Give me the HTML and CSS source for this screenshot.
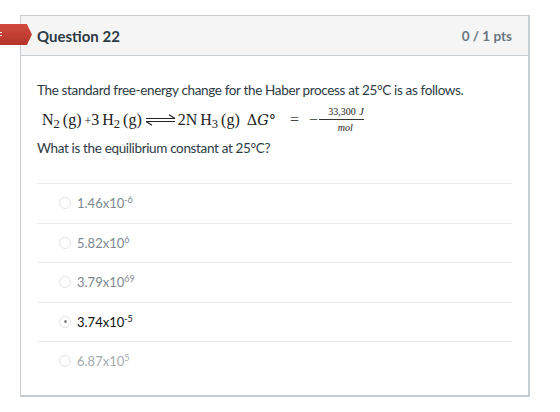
FILE: index.html
```html
<!DOCTYPE html>
<html>
<head>
  <title>Question 22</title>
  <meta name="viewport" content="width=device-width, initial-scale=1.0">
  <link rel="stylesheet" href="styles.css">
</head>
<body>

  <div class="question">
    <div class="question-header">
      <span class="flag"></span>
      <span class="question-name">Question 22</span>
      <span class="points">0 / 1 pts</span>
    </div>

    <div class="question-body">
      <p class="question-text">The standard free-energy change for the Haber process at 25&deg;C is as follows.</p>

      <div class="equation">
        <span>N<sub>2</sub> (g) <span class="plus">+</span>3 H<sub>2</sub> (g)</span>
        <svg class="eq-arrow" width="31" height="12" viewBox="0 0 31 12">
          <path d="M1 4.5 H30 M30 4.5 L24 0.8" fill="none" stroke="#222" stroke-width="1.2"/>
          <path d="M1 7.5 H30 M1 7.5 L7 11.2" fill="none" stroke="#222" stroke-width="1.2"/>
        </svg>
        <span>2N H<sub>3</sub> (g)</span>
        <span class="delta">&Delta;<i>G</i>&deg;</span>
        <span class="eq-sign">=</span>
        <span class="eq-sign minus">&minus;</span>
        <span class="fraction">
          <span class="num">33,300 <i>J</i></span>
          <span class="den"><i>mol</i></span>
        </span>
      </div>

      <p class="question-text">What is the equilibrium constant at 25&deg;C?</p>

      <div class="answers">
        <label class="answer">
          <span class="radio"></span>
          <span>1.46x10<sup>-6</sup></span>
        </label>
        <label class="answer">
          <span class="radio"></span>
          <span>5.82x10<sup>6</sup></span>
        </label>
        <label class="answer">
          <span class="radio"></span>
          <span>3.79x10<sup>69</sup></span>
        </label>
        <label class="answer selected">
          <span class="radio"></span>
          <span>3.74x10<sup>-5</sup></span>
        </label>
        <label class="answer faded">
          <span class="radio"></span>
          <span>6.87x10<sup>5</sup></span>
        </label>
      </div>
    </div>
  </div>

</body>
</html>
```

FILE: styles.css
```css
body {
  margin: 0;
  padding: 15px 30px 15px 20px;
  font-family: Lato, "Open Sans", sans-serif;
  background-color: #fff;
  color: #2d3b45;
}

.question {
  border: 1px solid #c7cdd1;
  border-right-width: 2px;
  border-bottom-width: 2px;
}

.question-header {
  position: relative;
  display: flex;
  align-items: center;
  justify-content: space-between;
  height: 39px;
  padding: 0 16px;
  background-color: #f5f5f5;
  border-bottom: 1px solid #c7cdd1;
}

/* red marker that sticks out over the left edge */
.flag {
  position: absolute;
  left: -21px;
  top: 8px;
  width: 32px;
  height: 21px;
  background: linear-gradient(#d24a3d, #b3342a);
  clip-path: polygon(0 0, 84% 0, 100% 50%, 84% 100%, 0 100%);
}

.flag::before {
  content: "";
  position: absolute;
  left: 0;
  top: 8px;
  width: 2px;
  height: 1px;
  background-color: #fff;
  box-shadow: 0 3px 0 #fff;
}

.question-name {
  font-size: 15px;
  font-weight: bold;
  color: #2d3b45;
}

.points {
  font-size: 13.5px;
  font-weight: bold;
  color: #6b7780;
}

.question-body {
  padding: 24px 16px 14px;
}

.question-text {
  margin: 0;
  font-size: 13.5px;
  letter-spacing: -0.35px;
  line-height: 20px;
}

.equation {
  display: flex;
  align-items: center;
  height: 32px;
  margin: 4px 0 2px 5px;
  font-family: "Liberation Serif", "DejaVu Serif", serif;
  font-size: 16px;
  word-spacing: -1px;
  color: #222;
}

.equation sub {
  font-size: 12.5px;
  vertical-align: -3px;
  line-height: 0;
}

.plus {
  font-size: 12px;
}

.eq-arrow {
  margin: 0 2px 0 3px;
}

.delta {
  margin-left: 7px;
  font-family: "DejaVu Serif", serif;
  font-size: 14.5px;
}

.eq-sign {
  margin-left: 14px;
  font-size: 16px;
  color: #444;
}

.eq-sign.minus {
  margin-left: 10px;
}

.fraction {
  display: inline-flex;
  flex-direction: column;
  align-items: center;
  margin-left: 1px;
  font-size: 10px;
  line-height: 12px;
  word-spacing: 1px;
}

.fraction .num {
  align-self: stretch;
  padding: 0 0 1px 9px;
  border-bottom: 1px solid #333;
}

.fraction .den {
  padding: 2px 0 0 8px;
}

.answers {
  margin-top: 25px;
}

.answer {
  display: flex;
  align-items: center;
  height: 38.5px;
  padding-left: 22px;
  border-top: 1px solid #ebebeb;
  font-size: 13px;
  color: #7d878e;
}

.answer sup {
  font-size: 9px;
  vertical-align: 5px;
  line-height: 0;
}

.radio {
  box-sizing: border-box;
  display: inline-flex;
  align-items: center;
  justify-content: center;
  width: 12px;
  height: 12px;
  margin-right: 6px;
  border: 1px solid #e3e3e3;
  border-radius: 50%;
}

.answer.selected {
  color: #111;
}

.answer.selected .radio::after {
  content: "";
  width: 3px;
  height: 3px;
  border-radius: 50%;
  background-color: #888;
}

.answer.faded {
  color: #a3abb0;
}
```
